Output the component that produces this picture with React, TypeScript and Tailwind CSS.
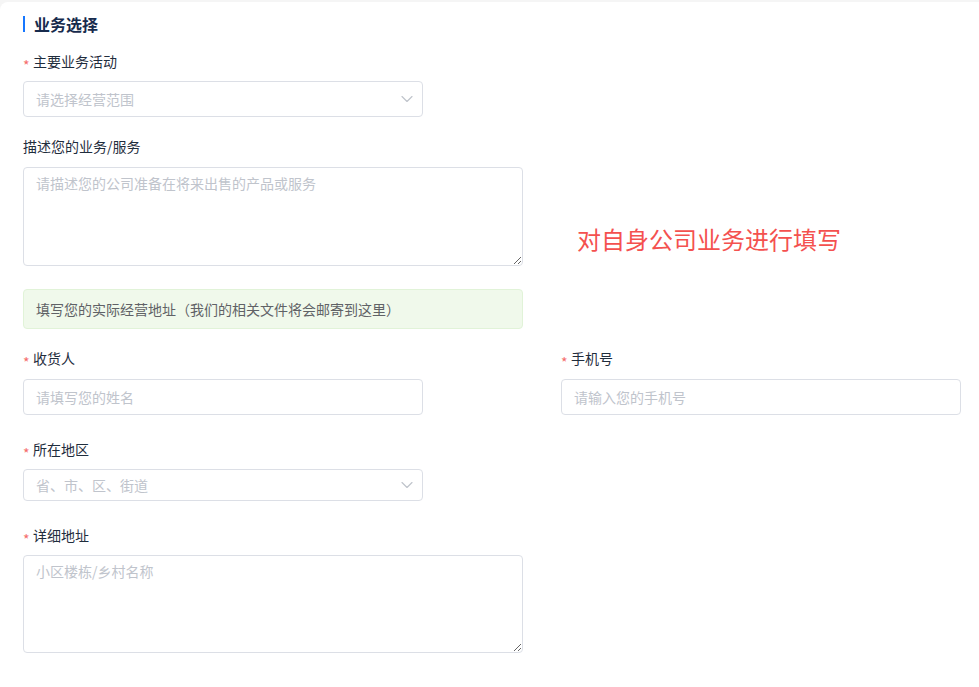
import React from 'react';
import { ChevronDown } from 'lucide-react';

const FONT = "font-['Noto_Sans_CJK_SC','Noto_Sans',sans-serif]";

const FieldLabel = ({ text, required }: { text: string; required?: boolean }) => (
  <div className="flex h-5 items-center text-[14px] leading-5 text-[#1f2d3d]">
    {required && (
      <span className="mr-[4px] mt-[5px] w-[6px] text-[14px] leading-none text-[#f56c6c]">*</span>
    )}
    <span className="-mt-[2px]">{text}</span>
  </div>
);

const SelectBox = ({ placeholder, height }: { placeholder: string; height: string }) => (
  <div
    className={`flex w-[400px] items-center justify-between rounded border border-[#dcdfe6] bg-white pl-3 pr-[5px] ${height}`}
  >
    <span className="text-[14px] text-[#c0c4cc]">{placeholder}</span>
    <ChevronDown size={20} strokeWidth={1.4} className="text-[#c0c4cc]" />
  </div>
);

const TextInput = ({ placeholder }: { placeholder: string }) => (
  <input
    className="h-9 w-[400px] rounded border border-[#dcdfe6] bg-white px-3 text-[14px] text-[#606266] outline-none placeholder:text-[#c0c4cc]"
    placeholder={placeholder}
  />
);

const TextArea = ({ placeholder, height }: { placeholder: string; height: string }) => (
  <textarea
    className={`block w-[500px] rounded border border-[#dcdfe6] bg-white px-3 py-[5px] text-[14px] leading-5 text-[#606266] outline-none placeholder:text-[#c0c4cc] ${height}`}
    placeholder={placeholder}
  />
);

export default function App() {
  return (
    <div className={`min-h-[687px] bg-[#f5f5f5] pt-[2px] ${FONT}`}>
      <div className="min-h-[685px] rounded-tl-lg bg-white pl-[23px] pt-[14px]">
        <div className="flex h-4 items-center">
          <div className="h-4 w-[2px] bg-[#1677ff]" />
          <h2 className="ml-[9px] text-[16px] font-bold leading-4 text-[#172b4d]">业务选择</h2>
        </div>

        <div className="mt-5">
          <FieldLabel text="主要业务活动" required />
          <div className="mt-[9px]">
            <SelectBox placeholder="请选择经营范围" height="h-9" />
          </div>
        </div>

        <div className="mt-5 flex items-start">
          <div>
            <FieldLabel text="描述您的业务/服务" />
            <div className="mt-[10px]">
              <TextArea placeholder="请描述您的公司准备在将来出售的产品或服务" height="h-[99px]" />
            </div>
          </div>
          <div className="ml-[54px] mt-[86px] text-[24px] leading-8 text-[#f4514f]">对自身公司业务进行填写</div>
        </div>

        <div className="mt-[23px] flex h-10 w-[500px] items-center rounded border border-[#e1f3d8] bg-[#f0f9eb] px-3 text-[14px] text-[#606266]">
          填写您的实际经营地址（我们的相关文件将会邮寄到这里）
        </div>

        <div className="mt-5 flex">
          <div>
            <FieldLabel text="收货人" required />
            <div className="mt-[10px]">
              <TextInput placeholder="请填写您的姓名" />
            </div>
          </div>
          <div className="ml-[138px]">
            <FieldLabel text="手机号" required />
            <div className="mt-[10px]">
              <TextInput placeholder="请输入您的手机号" />
            </div>
          </div>
        </div>

        <div className="mt-[25px]">
          <FieldLabel text="所在地区" required />
          <div className="mt-[9px]">
            <SelectBox placeholder="省、市、区、街道" height="h-8" />
          </div>
        </div>

        <div className="mt-[25px]">
          <FieldLabel text="详细地址" required />
          <div className="mt-[9px]">
            <TextArea placeholder="小区楼栋/乡村名称" height="h-[98px]" />
          </div>
        </div>
      </div>
    </div>
  );
}
